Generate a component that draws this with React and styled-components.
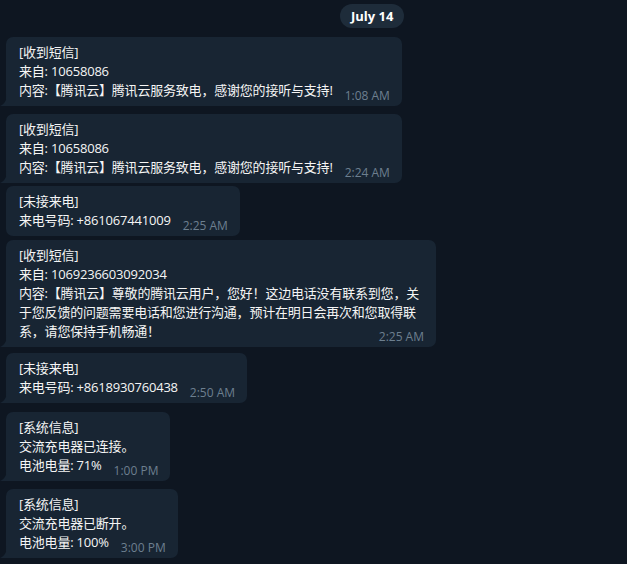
import React from "react";
import styled, { createGlobalStyle } from "styled-components";

const Global = createGlobalStyle`
  html, body { margin: 0; padding: 0; background: #0e1621; overflow: hidden; }
  body { font-family: "Open Sans", "Noto Sans CJK SC", sans-serif; }
`;

const Chat = styled.div`
  display: flex;
  flex-direction: column;
  align-items: flex-start;
  padding: 4px 0 0 6px;
  width: 627px;
  height: 564px;
  box-sizing: border-box;
`;

const DateRow = styled.div`
  align-self: stretch;
  display: flex;
  padding-left: 334px;
  margin-bottom: 9px;
`;

const DatePill = styled.div`
  height: 24px;
  line-height: 24px;
  padding: 0 11px;
  border-radius: 12px;
  background: #1e2c3a;
  color: #ffffff;
  font-weight: 700;
  font-size: 13px;
`;

const Bubble = styled.div`
  position: relative;
  display: inline-block;
  max-width: 430px;
  box-sizing: border-box;
  margin-top: ${(p) => p.$gap}px;
  padding: 6px 12px 6px 13px;
  background: #182533;
  border-radius: ${(p) => (p.$tail ? "7px 7px 7px 0" : "7px")};
  color: #f5f5f5;
  font-size: 13px;
  line-height: 19px;
`;

const Body = styled.span`
  white-space: pre-wrap;
  letter-spacing: -0.2px;
`;

const Time = styled.span`
  float: right;
  margin: 7px 0 -7px 12px;
  font-size: 12px;
  line-height: 15px;
  color: #6d7f8f;
  white-space: nowrap;
`;

const TailSvg = styled.svg`
  position: absolute;
  left: -6px;
  bottom: 0;
  display: block;
`;

const Tail = () => (
  <TailSvg width="7" height="12" viewBox="0 0 7 12">
    <path d="M7 0 C7 6 4.5 10 0 12 H7 Z" fill="#182533" />
  </TailSvg>
);

const messages = [
  { text: "[收到短信]\n来自: 10658086\n内容:【腾讯云】腾讯云服务致电，感谢您的接听与支持!", time: "1:08 AM", tail: true, gap: 0 },
  { text: "[收到短信]\n来自: 10658086\n内容:【腾讯云】腾讯云服务致电，感谢您的接听与支持!", time: "2:24 AM", tail: true, gap: 8 },
  { text: "[未接来电]\n来电号码: +861067441009", time: "2:25 AM", tail: false, gap: 3 },
  { text: "[收到短信]\n来自: 1069236603092034\n内容:【腾讯云】尊敬的腾讯云用户，您好！这边电话没有联系到您，关于您反馈的问题需要电话和您进行沟通，预计在明日会再次和您取得联系，请您保持手机畅通！", time: "2:25 AM", tail: true, gap: 4 },
  { text: "[未接来电]\n来电号码: +8618930760438", time: "2:50 AM", tail: true, gap: 6 },
  { text: "[系统信息]\n交流充电器已连接。\n电池电量: 71%", time: "1:00 PM", tail: true, gap: 9 },
  { text: "[系统信息]\n交流充电器已断开。\n电池电量: 100%", time: "3:00 PM", tail: true, gap: 8 },
];

export default function App() {
  return (
    <>
      <Global />
      <Chat>
        <DateRow>
          <DatePill>July 14</DatePill>
        </DateRow>
        {messages.map((m, i) => (
          <Bubble key={i} $tail={m.tail} $gap={m.gap}>
            <Body>{m.text}</Body>
            <Time>{m.time}</Time>
            {m.tail && <Tail />}
          </Bubble>
        ))}
      </Chat>
    </>
  );
}
